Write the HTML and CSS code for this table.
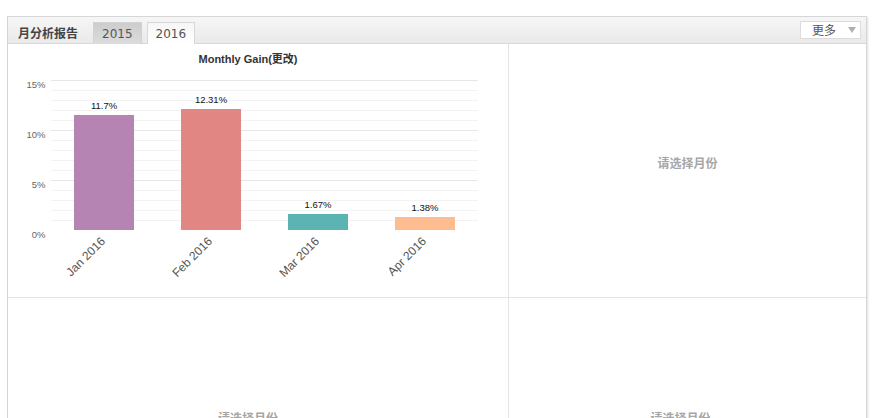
FILE: index.html
```html
<!DOCTYPE html>
<html lang="zh">
<head>
<meta charset="utf-8">
<title>月分析报告</title>
<link rel="stylesheet" href="styles.css">
</head>
<body>
<div class="page">
  <div class="panel">
    <div class="head">
      <span class="title">月分析报告</span>
      <span class="tab">2015</span>
      <span class="tab active">2016</span>
      <div class="more"><span class="more-text">更多</span><span class="caret"></span></div>
    </div>
    <div class="grid">
      <div class="cell cell-tl">
        <svg class="chart" width="500" height="253" viewBox="0 0 500 253">
          <text class="c-title" x="240" y="19">Monthly Gain(更改)</text>
          <g class="grid-minor">
            <line x1="43" x2="470" y1="46.5" y2="46.5"/>
            <line x1="43" x2="470" y1="56.5" y2="56.5"/>
            <line x1="43" x2="470" y1="66.5" y2="66.5"/>
            <line x1="43" x2="470" y1="76.5" y2="76.5"/>
            <line x1="43" x2="470" y1="96.5" y2="96.5"/>
            <line x1="43" x2="470" y1="106.5" y2="106.5"/>
            <line x1="43" x2="470" y1="116.5" y2="116.5"/>
            <line x1="43" x2="470" y1="126.5" y2="126.5"/>
            <line x1="43" x2="470" y1="146.5" y2="146.5"/>
            <line x1="43" x2="470" y1="156.5" y2="156.5"/>
            <line x1="43" x2="470" y1="166.5" y2="166.5"/>
            <line x1="43" x2="470" y1="176.5" y2="176.5"/>
          </g>
          <g class="grid-major">
            <line x1="43" x2="470" y1="36.5" y2="36.5"/>
            <line x1="43" x2="470" y1="86.5" y2="86.5"/>
            <line x1="43" x2="470" y1="136.5" y2="136.5"/>
          </g>
          <g class="y-lab">
            <text x="37.5" y="43.5">15%</text>
            <text x="37.5" y="93.5">10%</text>
            <text x="37.5" y="143.5">5%</text>
            <text x="37.5" y="193.5">0%</text>
          </g>
          <rect class="bar-jan" x="66" y="71" width="60" height="115"/>
          <rect class="bar-feb" x="173" y="65" width="60" height="121"/>
          <rect class="bar-mar" x="280" y="170" width="60" height="16"/>
          <rect class="bar-apr" x="387" y="173" width="60" height="13"/>
          <g class="v-lab">
            <text x="96" y="64.8">11.7%</text>
            <text x="203" y="58.8">12.31%</text>
            <text x="310" y="163.5">1.67%</text>
            <text x="417" y="166.8">1.38%</text>
          </g>
          <g class="x-lab">
            <text x="98" y="198" transform="rotate(-45 98 198)">Jan 2016</text>
            <text x="205" y="198" transform="rotate(-45 205 198)">Feb 2016</text>
            <text x="312" y="198" transform="rotate(-45 312 198)">Mar 2016</text>
            <text x="419" y="198" transform="rotate(-45 419 198)">Apr 2016</text>
          </g>
        </svg>
      </div>
      <div class="cell cell-tr"><span class="empty">请选择月份</span></div>
      <div class="cell cell-bl"><span class="empty">请选择月份</span></div>
      <div class="cell cell-br"><span class="empty">请选择月份</span></div>
    </div>
  </div>
</div>
</body>
</html>
```

FILE: styles.css
```css
html, body {
  margin: 0;
  padding: 0;
  overflow: hidden;
  background: #fff;
}

.page {
  padding: 16px 0 0 7px;
  font-family: "DejaVu Sans", "Noto Sans CJK SC", sans-serif;
}

.panel {
  width: 858px;
  border: 1px solid #d6d6d6;
  border-bottom: none;
  box-shadow: 1px 1px 2px rgba(0, 0, 0, 0.12);
  background: #fff;
}

.head {
  height: 26px;
  display: flex;
  align-items: flex-end;
  padding-left: 10px;
  background: linear-gradient(#f6f6f6, #e9e9e9);
  border-bottom: 1px solid #d8d8d8;
}

.title {
  align-self: center;
  margin-top: 4px;
  margin-right: 15px;
  font-family: "Noto Sans CJK SC", sans-serif;
  font-size: 12px;
  font-weight: bold;
  color: #444;
}

.tab {
  box-sizing: border-box;
  height: 22px;
  margin-bottom: -1px;
  margin-right: 5px;
  padding: 0 8px;
  line-height: 22px;
  font-size: 12px;
  color: #555;
  border: 1px solid #d2d2d2;
  border-bottom: none;
  background: linear-gradient(#cdcdcd, #dcdcdc);
}

.tab.active {
  background: linear-gradient(#f6f6f6, #fff);
  border-color: #d8d8d8;
}

.more {
  box-sizing: border-box;
  align-self: flex-start;
  margin: 4px 5px 0 auto;
  width: 61px;
  height: 18px;
  display: flex;
  align-items: center;
  background: #fff;
  border: 1px solid #dcdcdc;
}

.more-text {
  margin-left: 11px;
  font-family: "Noto Sans CJK SC", sans-serif;
  font-size: 12px;
  line-height: 16px;
  color: #555;
}

.caret {
  margin-left: auto;
  margin-right: 4px;
  width: 0;
  height: 0;
  border-left: 4px solid transparent;
  border-right: 4px solid transparent;
  border-top: 6px solid #b0b0b0;
}

.grid {
  display: grid;
  grid-template-columns: 501px 357px;
  grid-template-rows: 254px 254px;
}

.cell {
  box-sizing: border-box;
  display: flex;
  align-items: center;
  justify-content: center;
  padding-bottom: 16px;
}

.cell-tl {
  display: block;
  padding: 0;
  border-right: 1px solid #e4e4e4;
  border-bottom: 1px solid #e4e4e4;
}

.cell-tr {
  border-bottom: 1px solid #e4e4e4;
}

.cell-bl {
  border-right: 1px solid #e4e4e4;
  padding-right: 20px;
}

.cell-br {
  padding-right: 14px;
}

.empty {
  font-family: "Noto Sans CJK SC", sans-serif;
  font-size: 12px;
  font-weight: bold;
  color: #a6a6a6;
  line-height: 17px;
}

.chart {
  display: block;
}

.c-title {
  font-family: "Liberation Sans", "Noto Sans CJK SC", sans-serif;
  font-size: 11px;
  font-weight: bold;
  fill: #333;
  text-anchor: middle;
}

.grid-minor line {
  stroke: #f3f3f3;
  stroke-width: 1;
}

.grid-major line {
  stroke: #e6e6e6;
  stroke-width: 1;
}

.y-lab text {
  font-family: "Liberation Sans", sans-serif;
  font-size: 9.5px;
  fill: #666;
  text-anchor: end;
}

.v-lab text {
  font-family: "Liberation Sans", sans-serif;
  font-size: 9.5px;
  fill: #111;
  text-anchor: middle;
}

.x-lab text {
  font-family: "Liberation Sans", sans-serif;
  font-size: 12px;
  fill: #555;
  text-anchor: end;
}

.bar-jan { fill: #b584b3; }
.bar-feb { fill: #e28683; }
.bar-mar { fill: #5bb4b2; }
.bar-apr { fill: #fdbd91; }
```
